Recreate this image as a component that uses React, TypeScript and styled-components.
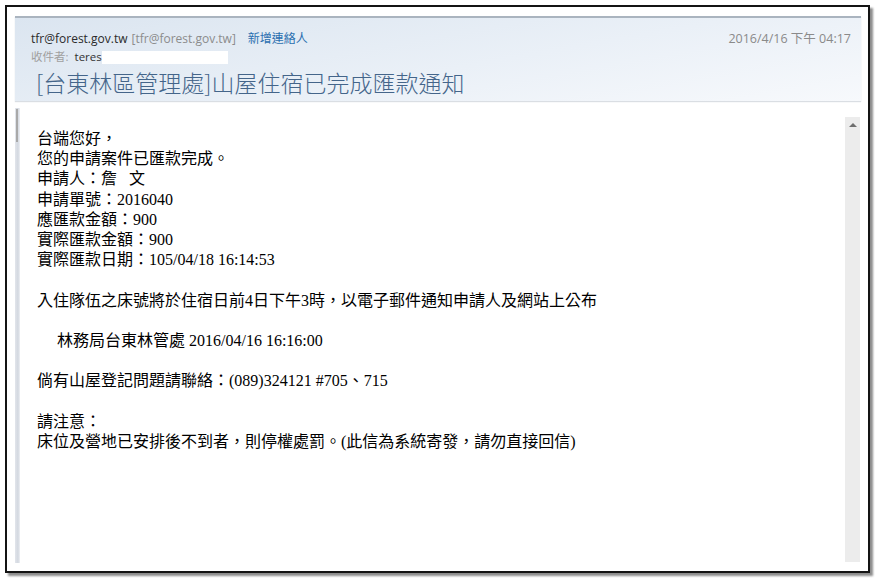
import React from 'react';
import styled, { createGlobalStyle } from 'styled-components';

const GlobalStyle = createGlobalStyle`
  html, body {
    margin: 0;
    padding: 0;
    background: #ffffff;
  }
`;

const Page = styled.div`
  width: 876px;
  height: 578px;
  padding: 5px 0 0 5px;
  box-sizing: border-box;
  background: #ffffff;
`;

const Frame = styled.div`
  width: 865px;
  height: 568px;
  box-sizing: border-box;
  border: 2px solid #141414;
  box-shadow: 3px 3px 2px rgba(0, 0, 0, 0.45);
  padding: 9px 7px 8px 8px;
  display: flex;
  flex-direction: column;
  background: #ffffff;
`;

const Header = styled.div`
  height: 85px;
  box-sizing: border-box;
  border-top: 2px solid #aab4bf;
  background: linear-gradient(170deg, #dbe5f0 0%, #eaf0f7 55%, #f7f9fc 100%);
  box-shadow: 0 1px 1px rgba(150, 160, 175, 0.35);
  padding: 13px 10px 0 16px;
  display: flex;
  flex-direction: column;
  font-family: 'Open Sans', 'Noto Sans CJK TC', sans-serif;
`;

const SenderRow = styled.div`
  display: flex;
  align-items: baseline;
  height: 18px;
  font-size: 12px;
  line-height: 16px;
`;

const Sender = styled.span`
  color: #2b2b2b;
`;

const SenderAddr = styled.span`
  color: #8c8c8c;
  margin-left: 4px;
`;

const AddContact = styled.span`
  color: #2a6fb0;
  margin-left: 12px;
`;

const DateText = styled.span`
  margin-left: auto;
  color: #8a8a8a;
  font-size: 12.5px;
`;

const RecipientRow = styled.div`
  display: flex;
  align-items: center;
  height: 16px;
  font-size: 11.5px;
  line-height: 16px;
`;

const RecipientLabel = styled.span`
  color: #a0a0a0;
`;

const RecipientName = styled.span`
  color: #333333;
  margin-left: 6px;
`;

const Redacted = styled.span<{ $width: number }>`
  display: inline-block;
  width: ${(p) => p.$width}px;
  height: 13px;
  background: #ffffff;
`;

const Subject = styled.div`
  margin: 5px 0 0 5px;
  font-family: 'Noto Sans CJK TC', sans-serif;
  font-weight: 300;
  font-size: 23px;
  line-height: 24px;
  color: #44658a;
`;

const Body = styled.div`
  flex: 1;
  display: flex;
  min-height: 0;
`;

const LeftRail = styled.div`
  width: 5px;
  margin-top: 7px;
  background: linear-gradient(to right, #e2e5eb, #d3d8e0 60%, #eef0f4);
  position: relative;

  &::before {
    content: '';
    position: absolute;
    left: 1px;
    top: 1px;
    width: 2px;
    height: 33px;
    background: #a9a9a9;
  }
`;

const Content = styled.div`
  flex: 1;
  padding: 28px 0 0 17px;
  font-family: 'Liberation Serif', 'Noto Sans CJK TC', serif;
  font-size: 16px;
  color: #000000;
`;

const Line = styled.div<{ $indent?: number }>`
  height: 20.2px;
  line-height: 20.2px;
  white-space: pre;
  padding-left: ${(p) => p.$indent ?? 0}px;
`;

const Scrollbar = styled.div`
  width: 15px;
  margin: 16px 1px 1px 0;
  background: #ececec;
  display: flex;
  justify-content: center;
  padding-top: 6px;
  box-sizing: border-box;
`;

const ArrowUp = styled.div`
  width: 0;
  height: 0;
  border-left: 4px solid transparent;
  border-right: 4px solid transparent;
  border-bottom: 4px solid #6e6e6e;
`;

const lines: { text: string; indent?: number }[] = [
  { text: '台端您好，' },
  { text: '您的申請案件已匯款完成。' },
  { text: '申請人：詹\u00a0\u00a0\u00a0文' },
  { text: '申請單號：2016040' },
  { text: '應匯款金額：900' },
  { text: '實際匯款金額：900' },
  { text: '實際匯款日期：105/04/18 16:14:53' },
  { text: '' },
  { text: '入住隊伍之床號將於住宿日前4日下午3時，以電子郵件通知申請人及網站上公布' },
  { text: '' },
  { text: '林務局台東林管處 2016/04/16 16:16:00', indent: 20 },
  { text: '' },
  { text: '倘有山屋登記問題請聯絡：(089)324121 #705、715' },
  { text: '' },
  { text: '請注意：' },
  { text: '床位及營地已安排後不到者，則停權處罰。(此信為系統寄發，請勿直接回信)' },
];

const App: React.FC = () => {
  return (
    <Page>
      <GlobalStyle />
      <Frame>
        <Header>
          <SenderRow>
            <Sender>tfr@forest.gov.tw</Sender>
            <SenderAddr>[tfr@forest.gov.tw]</SenderAddr>
            <AddContact>新增連絡人</AddContact>
            <DateText>2016/4/16 下午 04:17</DateText>
          </SenderRow>
          <RecipientRow>
            <RecipientLabel>收件者:</RecipientLabel>
            <RecipientName>teres</RecipientName>
            <Redacted $width={126} />
          </RecipientRow>
          <Subject>[台東林區管理處]山屋住宿已完成匯款通知</Subject>
        </Header>
        <Body>
          <LeftRail />
          <Content>
            {lines.map((line, i) => (
              <Line key={i} $indent={line.indent}>
                {line.text}
              </Line>
            ))}
          </Content>
          <Scrollbar>
            <ArrowUp />
          </Scrollbar>
        </Body>
      </Frame>
    </Page>
  );
};

export default App;
